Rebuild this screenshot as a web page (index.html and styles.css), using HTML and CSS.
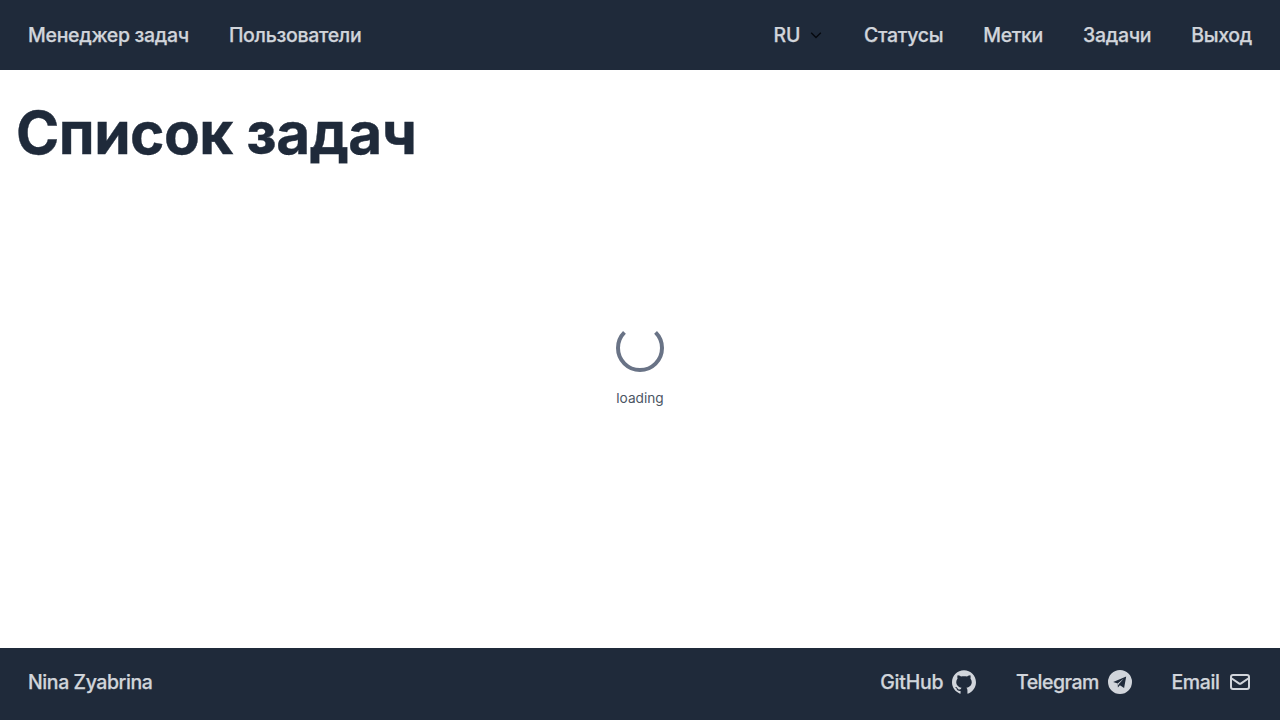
FILE: index.html
```html
<!DOCTYPE html>
<html lang="ru">
<head>
<meta charset="utf-8">
<title>Менеджер задач</title>
<link rel="stylesheet" href="styles.css">
</head>
<body>
<header class="bar header">
  <nav class="group"><a>Менеджер задач</a><a>Пользователи</a></nav>
  <nav class="group">
    <a class="lang">RU <svg class="chevron" viewBox="0 0 16 16"><path d="M3.2 5.7L8 10.5l4.8-4.8"/></svg></a>
    <a>Статусы</a><a>Метки</a><a>Задачи</a><a>Выход</a>
  </nav>
</header>
<main class="main">
  <h1 class="title">Список задач</h1>
  <div class="loader">
    <svg class="spinner" viewBox="0 0 48 48"><path d="M8.44 8.44A22 22 0 1 0 39.56 8.44"/></svg>
    <p class="label">loading</p>
  </div>
</main>
<footer class="bar footer">
  <span>Nina Zyabrina</span>
  <nav class="group">
    <a class="contact github">GitHub <svg class="icon" viewBox="64 64 896 896"><path d="M511.6 76.3C264.3 76.2 64 276.4 64 523.5 64 718.9 189.3 885 363.8 946c23.5 5.9 19.9-10.8 19.9-22.2v-77.5c-135.7 15.9-141.2-73.9-150.3-88.9C215 726 171.5 718 184.5 703c30.9-15.9 62.4 4 98.9 57.9 26.4 39.1 77.9 32.5 104 26 5.7-23.5 17.9-44.5 34.7-60.8-140.6-25.2-199.2-111-199.2-213 0-49.5 16.3-95 48.3-131.7-20.4-60.5 1.9-112.3 4.9-120 58.1-5.2 118.5 41.6 123.2 45.3 33-8.9 70.7-13.6 112.9-13.6 42.4 0 80.2 4.9 113.5 13.9 11.3-8.6 67.3-48.8 121.3-43.9 2.9 7.7 24.7 58.3 5.5 118 32.4 36.8 48.9 82.7 48.9 132.3 0 102.2-59 188.1-200 212.9a127.5 127.5 0 0 1 38.1 91v112.5c.8 9 0 17.9 15 17.9 177.1-59.7 304.6-227 304.6-424.1 0-247.2-200.4-447.3-447.5-447.3z"/></svg></a>
    <a class="contact telegram">Telegram <svg class="icon" viewBox="0 0 24 24"><path fill-rule="evenodd" d="M12 0a12 12 0 1 0 0 24 12 12 0 0 0 0-24zM18.2 6.6 16.1 18l-4.2-2.8-2 2.3-.2-4L5.2 12.1zM15.8 8.4l-6.1 5.1.5 2.1.7-1.7z"/></svg></a>
    <a class="contact">Email <svg class="icon outline" viewBox="0 0 24 24"><rect x="3" y="5" width="18" height="14" rx="2"/><path d="M3 8l7.9 5.3a2 2 0 0 0 2.2 0L21 8"/></svg></a>
  </nav>
</footer>
</body>
</html>
```

FILE: styles.css
```css
* { box-sizing: border-box; }
body {
  margin: 0;
  height: 100vh;
  display: flex;
  flex-direction: column;
  background: #fff;
  color: #1f2a3a;
  font-family: Inter, "Liberation Sans", sans-serif;
}
.bar {
  display: flex;
  justify-content: space-between;
  align-items: center;
  padding: 0 28px;
  background: #1f2a3a;
  color: #d1d5db;
  font-size: 19.5px;
  font-weight: 500;
  letter-spacing: -0.31px;
  -webkit-text-stroke: 0.25px #d1d5db;
}
.header { height: 70px; }
.footer { height: 72px; padding-bottom: 4px; letter-spacing: -0.42px; }
.group { display: flex; align-items: center; gap: 40px; }
.lang, .contact { display: flex; align-items: center; gap: 8px; }
.contact { gap: 8.6px; }
.github { letter-spacing: -0.22px; }
.telegram { letter-spacing: -0.5px; }
.chevron { width: 16px; height: 16px; fill: none; stroke: #05080e; stroke-width: 1.3; }
.icon { width: 24px; height: 24px; fill: currentColor; }
.outline { fill: none; stroke: currentColor; stroke-width: 2; stroke-linejoin: round; }
.main { flex: 1; display: flex; flex-direction: column; padding: 27px 16px 0; }
.title { margin: 0; font-size: 58.5px; line-height: 72px; font-weight: 700; letter-spacing: -0.5px; -webkit-text-stroke: 0.4px #1f2a3a; }
.loader { margin-top: 155px; display: flex; flex-direction: column; align-items: center; }
.spinner { width: 48px; height: 48px; fill: none; stroke: #697386; stroke-width: 4; }
.label { margin: 16px 0 0; font-size: 13.7px; line-height: 20px; color: #4b5563; }
```
